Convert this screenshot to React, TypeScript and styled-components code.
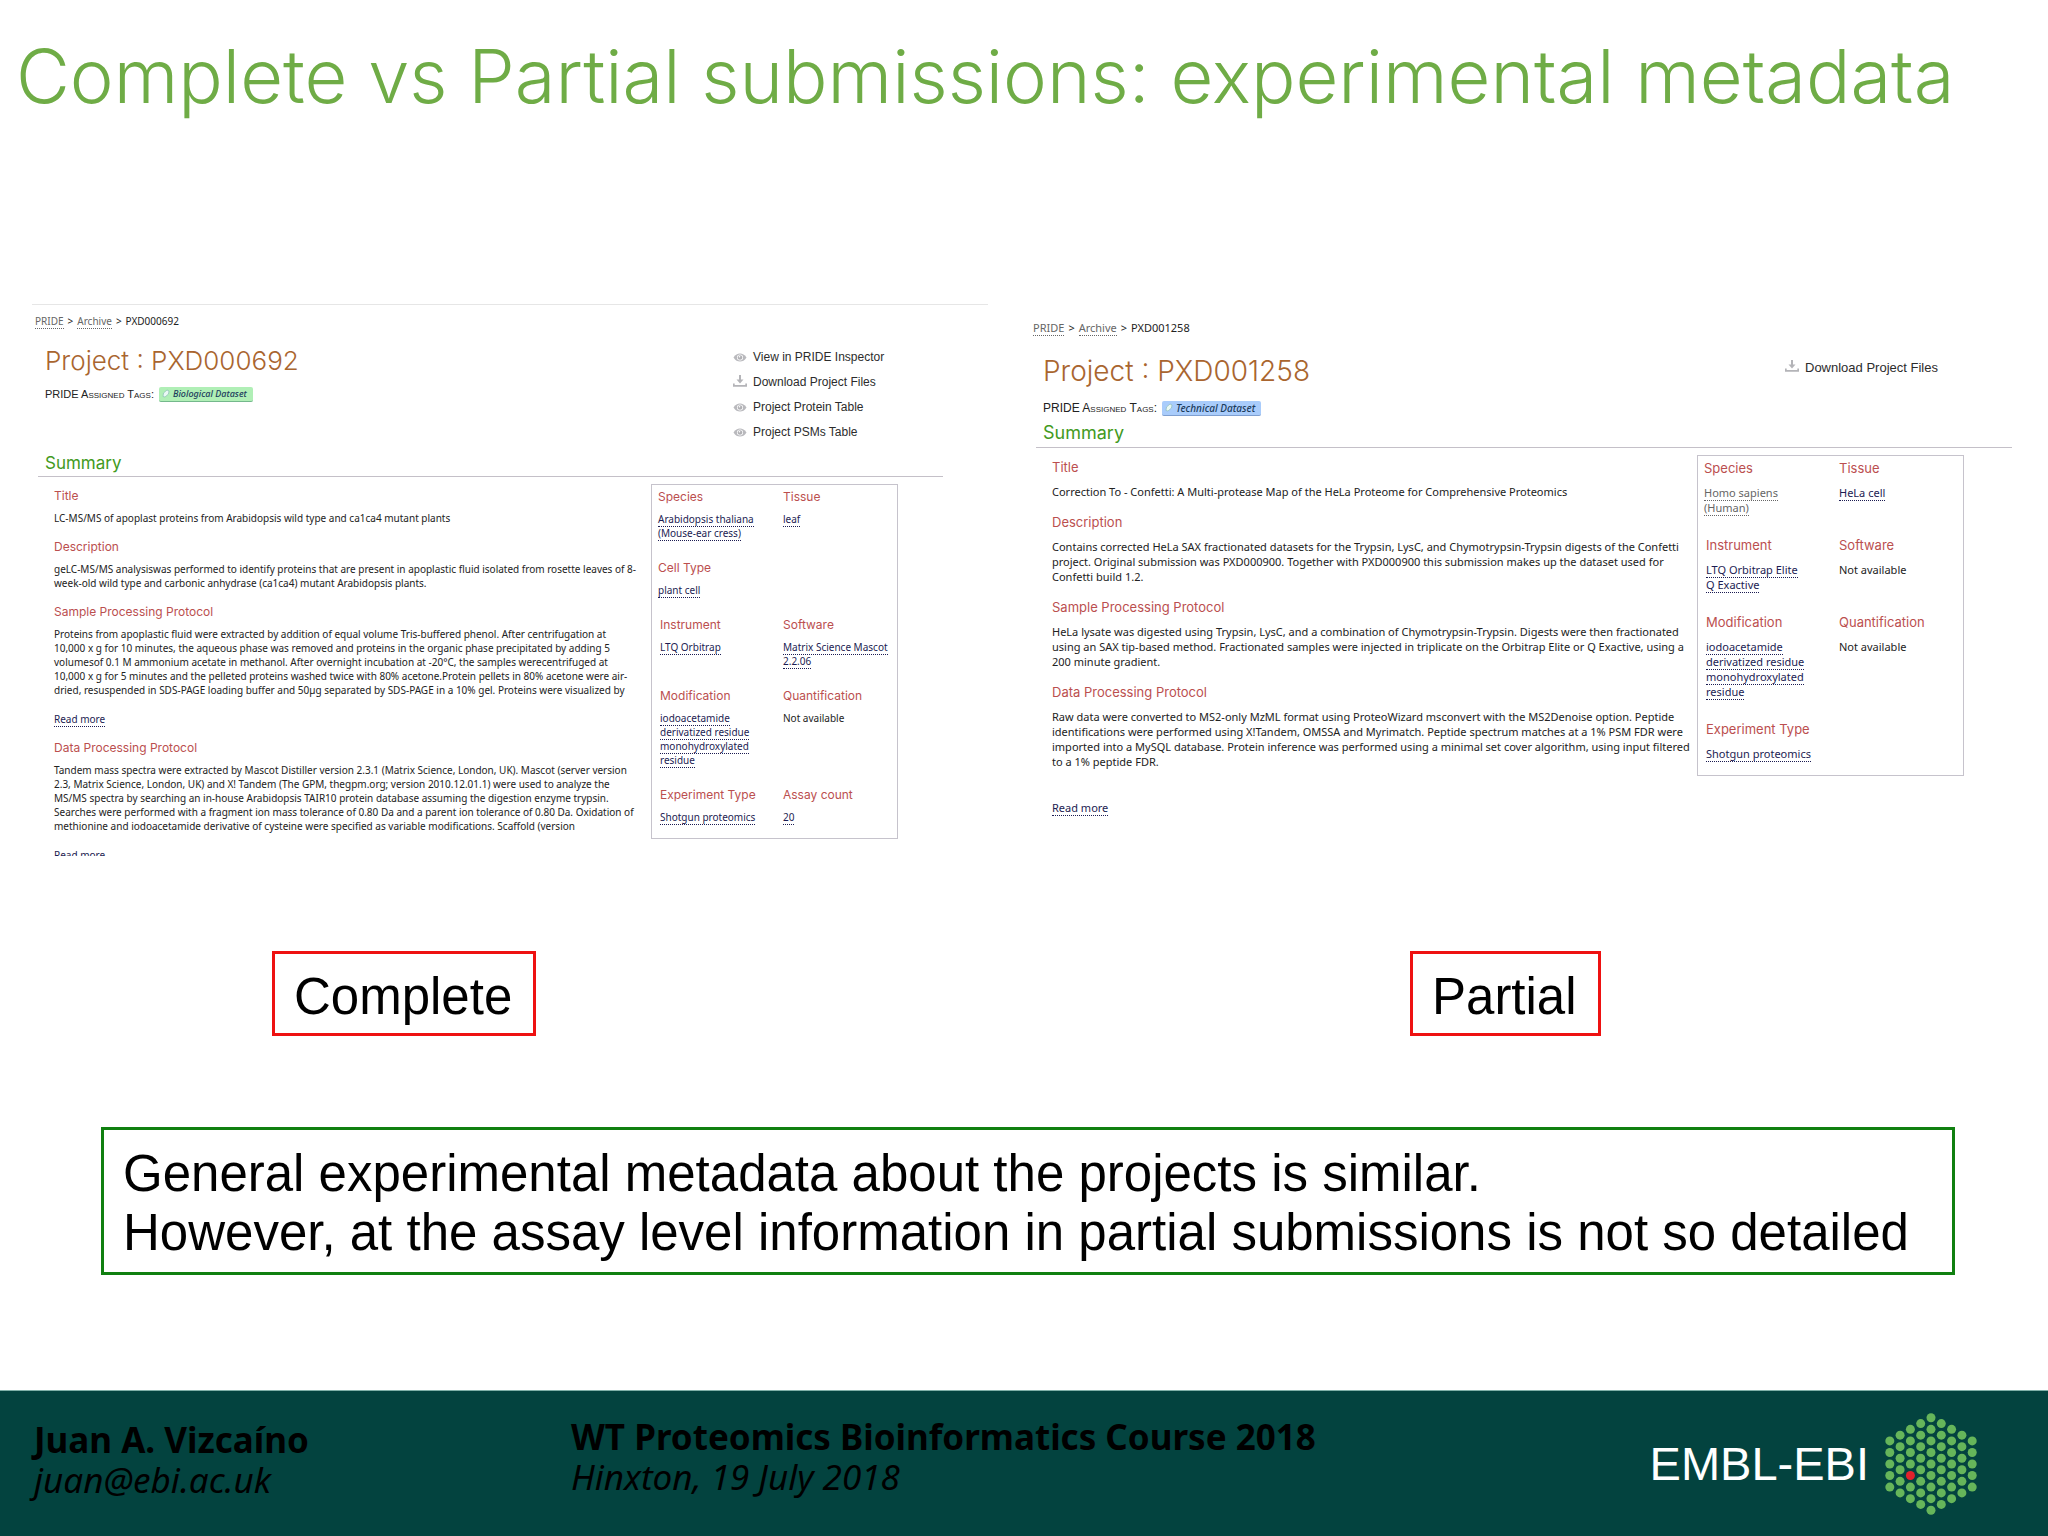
import React from 'react';
import styled, { createGlobalStyle, css, ThemeProvider } from 'styled-components';

const GlobalStyle = createGlobalStyle`
  * { box-sizing: border-box; }
  body { margin: 0; background: #fff; color: #000; font-family: 'Liberation Sans', Arial, sans-serif; }
  h1, h2, h3, h4, p, dl, dd, ul, ol { margin: 0; padding: 0; font-weight: 400; }
  ul, ol { list-style: none; }
`;

const light = "Inter, 'Helvetica Neue', 'Liberation Sans', sans-serif";
const humanist = "'Noto Sans', Verdana, sans-serif";

const compact = {
  text: 10, line: 14, title: 26, heading: 12, summary: 17, nav: 12, label: 11, tag: 9,
  crumbTop: 9, headTop: 17, tagTop: 9, summaryTop: 7, rulePad: 2, navWidth: 210,
  afterHeading: 8, section: 15, facts: 247, factGap: 21, factCol: 125, readGap: 15, end: 0,
};
const roomy = {
  text: 11, line: 15, title: 28, heading: 13, summary: 18, nav: 13, label: 12, tag: 10,
  crumbTop: 15, headTop: 20, tagTop: 13, summaryTop: 6, rulePad: 3, navWidth: 227,
  afterHeading: 10, section: 16, facts: 267, factGap: 23, factCol: 135, readGap: 31, end: 48,
};
type Size = typeof compact;
const px = (key: keyof Size) => ({ theme }: { theme: any }) => `${theme[key]}px`;

const Slide = styled.div`
  min-height: 100vh;
  display: flex;
  flex-direction: column;
`;

const SlideTitle = styled.h1`
  padding: 26px 16px 0;
  font-family: ${light};
  font-weight: 300;
  font-size: 74px;
  line-height: 100px;
  color: #6fac46;
`;

const Columns = styled.div`
  display: grid;
  grid-template-columns: 956fr 980fr;
  column-gap: 44px;
  padding: 0 36px 0 32px;
`;

const Panels = styled(Columns)`
  margin-top: 178px;
`;

const Panel = styled.article<{ $framed?: boolean }>`
  height: 552px;
  overflow: hidden;
  border-top: 1px solid ${p => (p.$framed ? '#e6e6e6' : 'transparent')};
  padding-left: ${p => (p.$framed ? 6 : 4)}px;
  padding-right: ${p => (p.$framed ? 45 : 0)}px;
  font-family: ${humanist};
  font-size: ${px('text')};
  line-height: ${px('line')};
  color: #222;
`;

const Crumbs = styled.ol`
  display: flex;
  gap: 4px;
  margin: ${px('crumbTop')} 0 0 -3px;
  li + li::before { content: '>'; margin-right: 4px; }
`;

const Link = styled.a<{ $muted?: boolean }>`
  color: ${p => (p.$muted ? '#666' : '#1c1c52')};
  text-decoration: none;
  border-bottom: 1px dotted currentColor;
`;

const Head = styled.header`
  display: flex;
  justify-content: space-between;
  margin-top: ${px('headTop')};
  padding-left: 7px;
`;

const ProjectName = styled.h2`
  font-family: ${light};
  font-weight: 300;
  font-size: ${px('title')};
  line-height: 32px;
  color: #a9652f;
`;

const Tags = styled.div`
  display: flex;
  align-items: center;
  gap: 5px;
  margin-top: ${px('tagTop')};
  line-height: 16px;
`;

const TagLabel = styled.span`
  font-family: 'Liberation Sans', Arial, sans-serif;
  font-variant: small-caps;
  font-size: ${px('label')};
`;

const Tag = styled.span<{ $blue?: boolean }>`
  display: flex;
  align-items: center;
  gap: 3px;
  padding: 0 6px 0 3px;
  border-radius: 2px;
  font-size: ${px('tag')};
  font-weight: 500;
  font-style: italic;
  line-height: 14px;
  color: #1c3c5c;
  ${p => p.$blue
    ? css`background: #a9ccfb; border-bottom: 1px solid #7f9fd0;`
    : css`background: #b0efb6; border-bottom: 1px solid #74b88c;`}
`;

const Actions = styled.ul`
  width: ${px('navWidth')};
  font-family: 'Liberation Sans', Arial, sans-serif;
  font-size: ${px('nav')};
  line-height: 25px;
`;

const Action = styled.a`
  display: flex;
  align-items: center;
  gap: 6px;
  color: #2c2c2c;
  text-decoration: none;
`;

const SummaryTitle = styled.h3`
  margin-top: ${px('summaryTop')};
  padding: 0 0 ${px('rulePad')} 7px;
  border-bottom: 1px solid #c4c0c8;
  font-family: ${light};
  font-size: ${px('summary')};
  line-height: 22px;
  color: #429a22;
`;

const Body = styled.div`
  display: grid;
  grid-template-columns: minmax(0, 1fr) ${px('facts')};
  align-items: start;
  padding: 7px ${px('end')} 0 16px;
`;

const FramedBody = styled(Body)`
  padding-right: 45px;
`;

const Sections = styled.div`
  padding-top: 5px;
`;

const Heading = styled.h4`
  font-family: ${light};
  font-size: ${px('heading')};
  line-height: 14px;
  color: #bb4f4f;
  margin-bottom: ${px('afterHeading')};
`;

const Section = styled.section`
  margin-bottom: ${px('section')};
`;

const Copy = styled.p`
  white-space: pre;
`;

const ReadMore = styled.p`
  margin-top: ${px('readGap')};
`;

const Facts = styled.dl`
  display: grid;
  grid-template-columns: ${px('factCol')} 1fr;
  row-gap: ${px('factGap')};
  padding: 5px 0 14px 6px;
  border: 1px solid #c6c3cc;
`;

const Fact = styled.div<{ $indent?: boolean }>`
  padding-left: ${p => (p.$indent ? 2 : 0)}px;
  white-space: pre-line;
`;

const Labels = styled(Columns)`
  margin-top: 95px;
`;

const Label = styled.p<{ $start: number }>`
  justify-self: start;
  margin-left: ${p => p.$start}px;
  padding: 15px 21px 9px 19px;
  border: 3px solid #ee1111;
  font-size: 51px;
  line-height: 55px;
`;

const Note = styled.p`
  margin: 91px 93px 0 101px;
  padding: 14px 19px 10px;
  border: 3px solid #108010;
  font-size: 51px;
  line-height: 59px;
`;

const Footer = styled.footer`
  display: flex;
  margin-top: auto;
  height: 146px;
  border-top: 1px solid #7fb0a8;
  background: #03433f;
  font-family: 'Noto Sans', Tahoma, sans-serif;
  font-size: 35px;
  line-height: 40px;
`;

const Credit = styled.address`
  padding-top: 26px;
  white-space: nowrap;
  color: #000;
  a { color: inherit; text-decoration: none; }
  strong { display: block; font-style: normal; }
`;

const Author = styled(Credit)`
  flex: 0 0 571px;
  padding: 29px 0 0 34px;
`;

const Logo = styled.div`
  display: flex;
  align-items: center;
  gap: 16px;
  margin: 0 71px 0 auto;
  font-family: 'Liberation Sans', Arial, sans-serif;
  font-size: 47px;
  color: #fff;
`;

const EyeIcon = () => (
  <svg width="14" height="9" viewBox="0 0 13 9" aria-hidden="true">
    <path d="M0 4.5C2 1.5 4 .5 6.500 .5S11 1.500 13 4.500C11 7.500 9 8.500 6.500 8.500S2 7.500 0 4.500Z" fill="#b9b9bd" />
    <circle cx="6.500" cy="4.500" r="3" fill="#fff" />
    <circle cx="6.500" cy="4.500" r="2.300" fill="#b0b0b4" />
    <circle cx="6" cy="3.800" r=".8" fill="#fff" />
  </svg>
);

const DownloadIcon = () => (
  <svg width="14" height="16" viewBox="0 0 14 16" aria-hidden="true">
    <path d="M6 0h2v4.500h2.500L7 8.500 3.500 4.500H6Z" fill="#b4b4b8" />
    <path d="M.8 8.500v2.400h12.400V8.500" fill="none" stroke="#b4b4b8" strokeWidth="1.800" />
  </svg>
);

const TagIcon = () => (
  <svg width="8" height="9" viewBox="0 0 8 9" aria-hidden="true">
    <path d="M1 7.500 1.500 4 5 1l2 1-.5 3L3 8Z" fill="#e9f8f4" stroke="#7fb6b0" strokeWidth=".6" />
  </svg>
);

const DotHexagon = () => {
  const dots: React.ReactNode[] = [];
  for (let col = -4; col <= 4; col++) {
    const count = 9 - Math.abs(col);
    for (let row = 0; row < count; row++) {
      const red = col === -2 && row === 4;
      dots.push(
        <circle
          key={`${col}:${row}`}
          cx={46 + col * 10.3}
          cy={51 + (row - (count - 1) / 2) * 11.55}
          r="4.500"
          fill={red ? '#e0222c' : '#66b55a'}
        />,
      );
    }
  }
  return <svg width="92" height="102" viewBox="0 0 92 102" aria-hidden="true">{dots}</svg>;
};

type FactItem = { name: string; lines: string[]; plain?: boolean; muted?: boolean; indent?: boolean } | null;
type Project = {
  id: string;
  tag: string;
  blue?: boolean;
  actions: [string, 'eye' | 'download'][];
  sections: { name: string; text: string[]; more?: boolean }[];
  facts: FactItem[];
};

const complete: Project = {
  id: 'PXD000692',
  tag: 'Biological Dataset',
  actions: [
    ['View in PRIDE Inspector', 'eye'],
    ['Download Project Files', 'download'],
    ['Project Protein Table', 'eye'],
    ['Project PSMs Table', 'eye'],
  ],
  sections: [
    { name: 'Title', text: ['LC-MS/MS of apoplast proteins from Arabidopsis wild type and ca1ca4 mutant plants'] },
    {
      name: 'Description',
      text: [
        'geLC-MS/MS analysiswas performed to identify proteins that are present in apoplastic fluid isolated from rosette leaves of 8-',
        'week-old wild type and carbonic anhydrase (ca1ca4) mutant Arabidopsis plants.',
      ],
    },
    {
      name: 'Sample Processing Protocol',
      text: [
        'Proteins from apoplastic fluid were extracted by addition of equal volume Tris-buffered phenol. After centrifugation at',
        '10,000 x g for 10 minutes, the aqueous phase was removed and proteins in the organic phase precipitated by adding 5',
        'volumesof 0.1 M ammonium acetate in methanol. After overnight incubation at -20°C, the samples werecentrifuged at',
        '10,000 x g for 5 minutes and the pelleted proteins washed twice with 80% acetone.Protein pellets in 80% acetone were air-',
        'dried, resuspended in SDS-PAGE loading buffer and 50µg separated by SDS-PAGE in a 10% gel. Proteins were visualized by',
      ],
      more: true,
    },
    {
      name: 'Data Processing Protocol',
      text: [
        'Tandem mass spectra were extracted by Mascot Distiller version 2.3.1 (Matrix Science, London, UK). Mascot (server version',
        '2.3, Matrix Science, London, UK) and X! Tandem (The GPM, thegpm.org; version 2010.12.01.1) were used to analyze the',
        'MS/MS spectra by searching an in-house Arabidopsis TAIR10 protein database assuming the digestion enzyme trypsin.',
        'Searches were performed with a fragment ion mass tolerance of 0.80 Da and a parent ion tolerance of 0.80 Da. Oxidation of',
        'methionine and iodoacetamide derivative of cysteine were specified as variable modifications. Scaffold (version',
      ],
      more: true,
    },
  ],
  facts: [
    { name: 'Species', lines: ['Arabidopsis thaliana\n(Mouse-ear cress)'] },
    { name: 'Tissue', lines: ['leaf'] },
    { name: 'Cell Type', lines: ['plant cell'] },
    null,
    { name: 'Instrument', lines: ['LTQ Orbitrap'], indent: true },
    { name: 'Software', lines: ['Matrix Science Mascot\n2.2.06'] },
    { name: 'Modification', lines: ['iodoacetamide\nderivatized residue', 'monohydroxylated\nresidue'], indent: true },
    { name: 'Quantification', lines: ['Not available'], plain: true },
    { name: 'Experiment Type', lines: ['Shotgun proteomics'], indent: true },
    { name: 'Assay count', lines: ['20'] },
  ],
};

const partial: Project = {
  id: 'PXD001258',
  tag: 'Technical Dataset',
  blue: true,
  actions: [['Download Project Files', 'download']],
  sections: [
    { name: 'Title', text: ['Correction To - Confetti: A Multi-protease Map of the HeLa Proteome for Comprehensive Proteomics'] },
    {
      name: 'Description',
      text: [
        'Contains corrected HeLa SAX fractionated datasets for the Trypsin, LysC, and Chymotrypsin-Trypsin digests of the Confetti',
        'project. Original submission was PXD000900. Together with PXD000900 this submission makes up the dataset used for',
        'Confetti build 1.2.',
      ],
    },
    {
      name: 'Sample Processing Protocol',
      text: [
        'HeLa lysate was digested using Trypsin, LysC, and a combination of Chymotrypsin-Trypsin. Digests were then fractionated',
        'using an SAX tip-based method. Fractionated samples were injected in triplicate on the Orbitrap Elite or Q Exactive, using a',
        '200 minute gradient.',
      ],
    },
    {
      name: 'Data Processing Protocol',
      text: [
        'Raw data were converted to MS2-only MzML format using ProteoWizard msconvert with the MS2Denoise option. Peptide',
        'identifications were performed using X!Tandem, OMSSA and Myrimatch. Peptide spectrum matches at a 1% PSM FDR were',
        'imported into a MySQL database. Protein inference was performed using a minimal set cover algorithm, using input filtered',
        'to a 1% peptide FDR.',
      ],
      more: true,
    },
  ],
  facts: [
    { name: 'Species', lines: ['Homo sapiens\n(Human)'], muted: true },
    { name: 'Tissue', lines: ['HeLa cell'] },
    { name: 'Instrument', lines: ['LTQ Orbitrap Elite', 'Q Exactive'], indent: true },
    { name: 'Software', lines: ['Not available'], plain: true },
    { name: 'Modification', lines: ['iodoacetamide\nderivatized residue', 'monohydroxylated\nresidue'], indent: true },
    { name: 'Quantification', lines: ['Not available'], plain: true },
    { name: 'Experiment Type', lines: ['Shotgun proteomics'], indent: true },
    null,
  ],
};

const ProjectPanel = ({ project, framed }: { project: Project; framed?: boolean }) => {
  const Content = framed ? FramedBody : Body;
  return (
    <Panel $framed={framed}>
      <nav aria-label="Breadcrumb">
        <Crumbs>
          <li><Link $muted href="#pride">PRIDE</Link></li>
          <li><Link $muted href="#archive">Archive</Link></li>
          <li>{project.id}</li>
        </Crumbs>
      </nav>
      <Head>
        <div>
          <ProjectName>Project : {project.id}</ProjectName>
          <Tags>
            <TagLabel>PRIDE Assigned Tags:</TagLabel>
            <Tag $blue={project.blue}><TagIcon />{project.tag}</Tag>
          </Tags>
        </div>
        <Actions>
          {project.actions.map(([label, icon]) => (
            <li key={label}>
              <Action href="#files">{icon === 'eye' ? <EyeIcon /> : <DownloadIcon />}{label}</Action>
            </li>
          ))}
        </Actions>
      </Head>
      <SummaryTitle>Summary</SummaryTitle>
      <Content>
        <Sections>
          {project.sections.map(s => (
            <Section key={s.name}>
              <Heading>{s.name}</Heading>
              <Copy>{s.text.join('\n')}</Copy>
              {s.more && <ReadMore><Link href="#more">Read more</Link></ReadMore>}
            </Section>
          ))}
        </Sections>
        <Facts>
          {project.facts.map((f, i) => f === null ? <div key={i} /> : (
            <Fact key={f.name} $indent={f.indent}>
              <Heading as="dt">{f.name}</Heading>
              {f.lines.map(line => (
                <dd key={line}>{f.plain ? line : <Link $muted={f.muted} href="#term">{line}</Link>}</dd>
              ))}
            </Fact>
          ))}
        </Facts>
      </Content>
    </Panel>
  );
};

export default function App() {
  return (
    <Slide>
      <GlobalStyle />
      <SlideTitle>Complete vs Partial submissions: experimental metadata</SlideTitle>
      <main>
        <Panels>
          <ThemeProvider theme={compact}><ProjectPanel project={complete} framed /></ThemeProvider>
          <ThemeProvider theme={roomy}><ProjectPanel project={partial} /></ThemeProvider>
        </Panels>
        <Labels>
          <Label $start={240}>Complete</Label>
          <Label $start={378}>Partial</Label>
        </Labels>
        <Note>
          General experimental metadata about the projects is similar.<br />
          However, at the assay level information in partial submissions is not so detailed
        </Note>
      </main>
      <Footer>
        <Author>
          <strong>Juan A. Vizcaíno</strong>
          <a href="mailto:juan@ebi.ac.uk">juan@ebi.ac.uk</a>
        </Author>
        <Credit>
          <strong>WT Proteomics Bioinformatics Course 2018</strong>
          Hinxton, 19 July 2018
        </Credit>
        <Logo>EMBL-EBI<DotHexagon /></Logo>
      </Footer>
    </Slide>
  );
}
